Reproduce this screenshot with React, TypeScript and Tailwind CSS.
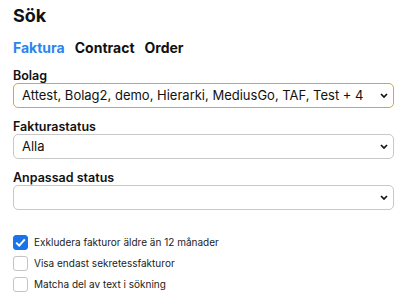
import React, { useState } from "react";

const Chevron = () => (
  <svg width="8" height="5" viewBox="0 0 8 5" className="shrink-0">
    <path d="M1 1l3 3 3-3" fill="none" stroke="#111" strokeWidth="1.7" />
  </svg>
);

const SelectBox = ({ value, active }: { value: string; active?: boolean }) => (
  <div
    className={`mr-[-2px] flex h-[25px] items-center justify-between rounded-[5px] border bg-white pl-[8px] pr-[5px] text-[13px] text-[#111] ${
      active ? "border-[#f5a300]" : "border-[#c8c8c8]"
    }`}
  >
    <span className="truncate">{value}</span>
    <Chevron />
  </div>
);

const Field = ({ label, value, active }: { label: string; value: string; active?: boolean }) => (
  <div className="flex flex-col">
    <div className="text-[12.5px] font-semibold leading-[14px] text-[#111]">{label}</div>
    <SelectBox value={value} active={active} />
  </div>
);

const Check = ({ checked, label }: { checked?: boolean; label: string }) => (
  <div className="flex h-[15px] items-center gap-[6px]">
    <div
      className={`flex h-[15px] w-[15px] items-center justify-center rounded-[3px] border ${
        checked ? "border-[#1a73e8] bg-[#1a73e8]" : "border-[#c4c4c4] bg-white"
      }`}
    >
      {checked && (
        <svg width="11" height="9" viewBox="0 0 11 9">
          <path d="M1.2 4.6l3 3L9.8 1.4" fill="none" stroke="#fff" strokeWidth="2" />
        </svg>
      )}
    </div>
    <span className="text-[10px] text-[#222]">{label}</span>
  </div>
);

export default function App() {
  const [tab] = useState("Faktura");
  return (
    <div className="h-[307px] w-[405px] bg-white px-[13px] pt-[4px]" style={{ fontFamily: "Inter, sans-serif" }}>
      <h1 className="text-[18px] font-bold leading-[24px] text-[#111]">Sök</h1>
      <div className="mt-[11px] flex gap-[10px] text-[14px] font-bold leading-[18px]">
        {["Faktura", "Contract", "Order"].map((t) => (
          <span key={t} className={t === tab ? "text-[#2a85f0]" : "text-[#111]"}>
            {t}
          </span>
        ))}
      </div>
      <div className="mt-[12px] flex flex-col gap-[12px]">
        <Field label="Bolag" value="Attest, Bolag2, demo, Hierarki, MediusGo, TAF, Test + 4" active />
        <Field label="Fakturastatus" value="Alla" />
        <Field label="Anpassad status" value="" />
      </div>
      <div className="mt-[25px] flex flex-col gap-[6px]">
        <Check checked label="Exkludera fakturor äldre än 12 månader" />
        <Check label="Visa endast sekretessfakturor" />
        <Check label="Matcha del av text i sökning" />
      </div>
    </div>
  );
}
